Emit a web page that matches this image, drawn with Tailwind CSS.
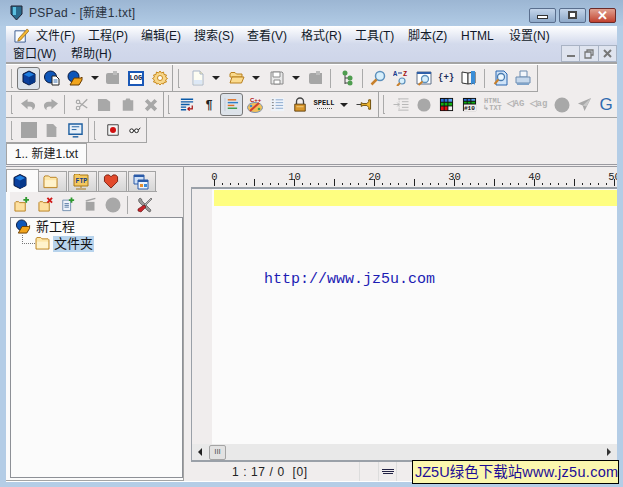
<!DOCTYPE html>
<html lang="en">
<head>
<meta charset="UTF-8">
<title>PSPad</title>
<script src="https://cdn.jsdelivr.net/npm/@tailwindcss/browser@4"></script>
</head>
<body class="bg-[#b4cde6]">
<svg width="0" height="0" class="absolute">
  <defs>
    <symbol id="cube" viewBox="0 0 16 16"><path d="M8 1l6 3v8l-6 3-6-3V4z" fill="#0b3f9c" stroke="#06163c"/><path d="M8 7l6-3v8l-6 3z" fill="#06388a"/><path d="M3 4.500L8 2l5 2.500L8 7z" fill="#1f7fe0"/></symbol>
    <symbol id="projdoc" viewBox="0 0 16 16"><circle cx="6.500" cy="7" r="6" fill="#0f56b8" stroke="#06163c"/><path d="M8 6h4l3 3v6H8z" fill="#fff" stroke="#222"/><path d="M9.500 10h4M9.500 12h4" stroke="#3a70b0"/></symbol>
    <symbol id="projopen" viewBox="0 0 16 16"><circle cx="6.500" cy="6.500" r="5.500" fill="#0f56b8" stroke="#06163c"/><path d="M7 8h7l1-1v3l-3 5H3z" fill="#f2a51c" stroke="#6b3d00"/></symbol>
    <symbol id="graydisk" viewBox="0 0 16 16"><path d="M3 3h7v2h2V3h2v11H3a2 2 0 0 1-2-2V5a2 2 0 0 1 2-2z" fill="#a6a6a6"/><path d="M8 1h4v4H8z" fill="#bcbcbc"/></symbol>
    <symbol id="gear" viewBox="0 0 16 16"><path d="M8 1l1.500 2 2-1 .5 2.500 2.500.5-1 2 2 1.500-2 1.500 1 2-2.500.5-.5 1.500-2-.5L8 15l-1.500-1.500-2 .5-.5-1.500-2.500-.5 1-2L.5 8.500l2-1.500-1-2L4 4.500 4.500 2l2 1z" fill="#f7d68a" stroke="#c98a1c"/><circle cx="8" cy="8" r="2.500" fill="#fff" stroke="#c98a1c"/></symbol>
    <symbol id="newdoc" viewBox="0 0 16 16"><path d="M3 1h7l3 3v11H3z" fill="#fdfdf2" stroke="#a9b6c8"/><path d="M4 10h8v4H4z" fill="#dde8f6"/><path d="M10 1v3h3" fill="#f8e9b0" stroke="#a9b6c8"/></symbol>
    <symbol id="folder" viewBox="0 0 16 14"><path d="M1 2l1-1.500h4L7.500 2H14l1 1v10H1z" fill="#fde6a8" stroke="#b9801f"/><path d="M2 5h12v7H2z" fill="#fff3cc"/></symbol>
    <symbol id="folderopen" viewBox="0 0 16 16"><path d="M1 4l1-1.500h4L7.500 4H13v3H1z" fill="#f9d98c" stroke="#b9801f"/><path d="M1 13l2-6h12l-2.500 6z" fill="#fbdb8e" stroke="#b9801f"/></symbol>
    <symbol id="save" viewBox="0 0 16 16"><path d="M2 2h11l1 1v11H2z" fill="#e8e8e8" stroke="#8a8a8a"/><path d="M4 2h7v5H4zM5 10h6v4H5z" fill="#fff" stroke="#8a8a8a"/></symbol>
    <symbol id="tree" viewBox="0 0 16 16"><path d="M6 3v11M6 8h4M6 13h4" stroke="#444" fill="none"/><circle cx="6" cy="3" r="2.500" fill="#4f9d4f"/><circle cx="11" cy="8" r="2.500" fill="#4f9d4f"/><circle cx="11" cy="13" r="2.500" fill="#4f9d4f"/></symbol>
    <symbol id="glass" viewBox="0 0 16 16"><circle cx="10" cy="6" r="4.500" fill="#d7effc" stroke="#5d90bc" stroke-width="1.500"/><path d="M6.500 9.500L1.500 14.500" stroke="#c8802c" stroke-width="2.500"/></symbol>
    <symbol id="az" viewBox="0 0 16 16"><text x="0" y="6" font-size="7" font-weight="700" fill="#1c3c8c" font-family="Liberation Mono">A</text><path d="M5 3h4" stroke="#1c3c8c"/><text x="10" y="6" font-size="7" font-weight="700" fill="#a01010" font-family="Liberation Mono">Z</text><circle cx="9" cy="11" r="3" fill="#d7effc" stroke="#5d90bc" stroke-width="1.200"/><path d="M7 13l-3 3" stroke="#c8802c" stroke-width="2"/></symbol>
    <symbol id="winglass" viewBox="0 0 16 16"><path d="M1 2h14v12H1z" fill="#fff" stroke="#5c6e88"/><path d="M1 2h14v2H1z" fill="#2f5fa8"/><circle cx="9" cy="9" r="3.500" fill="#d7effc" stroke="#5d90bc" stroke-width="1.300"/><path d="M6.500 11.500l-4 3.500" stroke="#c8802c" stroke-width="2"/></symbol>
    <symbol id="book" viewBox="0 0 16 16"><path d="M1 2l6 1v11l-6-1z" fill="#fff" stroke="#333"/><path d="M7 3l7-1v11l-7 1z" fill="#f4f4f4" stroke="#333"/><path d="M10 1h4v14l-2-2-2 2z" fill="#3b8ed8"/></symbol>
    <symbol id="docglass" viewBox="0 0 16 16"><path d="M3 1h8l3 3v11H3z" fill="#cfe3f8" stroke="#2a66b0"/><circle cx="8" cy="7" r="3.500" fill="#eef8ff" stroke="#4a7cb0" stroke-width="1.300"/><path d="M5.500 9.500L1.500 14" stroke="#c8802c" stroke-width="2"/></symbol>
    <symbol id="printer" viewBox="0 0 16 16"><path d="M5 1h7v6H5z" fill="#f2f6fb" stroke="#6d8cb0"/><path d="M1 7h14v6H1z" fill="#c6d8ec" stroke="#6d8cb0"/><path d="M2 13h12v2H2z" fill="#7fa2c8"/></symbol>
    <symbol id="undo" viewBox="0 0 16 16"><path d="M7 2v3h3c3 0 5 2 5 4s-1 4-3 5c1-3-1-4-3-4H7v3L0 7z" fill="#a8a8a8"/></symbol>
    <symbol id="redo" viewBox="0 0 16 16"><path d="M9 2v3H6C3 5 1 7 1 9s1 4 3 5c-1-3 1-4 3-4h2v3l7-6z" fill="#a8a8a8"/></symbol>
    <symbol id="cut" viewBox="0 0 16 16"><circle cx="3.500" cy="5" r="2" fill="none" stroke="#a8a8a8" stroke-width="1.300"/><circle cx="3.500" cy="12" r="2" fill="none" stroke="#a8a8a8" stroke-width="1.300"/><path d="M5 6l9 6M5 11l9-9" stroke="#a8a8a8" stroke-width="1.500"/></symbol>
    <symbol id="copy" viewBox="0 0 16 16"><path d="M1 2h9l4 3v10H1z" fill="#a8a8a8"/></symbol>
    <symbol id="paste" viewBox="0 0 16 16"><path d="M6 1h4l1 2h3v12H2V3h3z" fill="#a8a8a8"/></symbol>
    <symbol id="xgray" viewBox="0 0 16 16"><path d="M1 4l3-3 4 4 4-4 3 3-4 4 4 4-3 3-4-4-4 4-3-3 4-4z" fill="#a8a8a8"/></symbol>
    <symbol id="wrap" viewBox="0 0 16 16"><path d="M1 2h14M1 5h14M1 8h10" stroke="#0a5aa8" stroke-width="1.600"/><path d="M1 11h6M1 14h6" stroke="#0a5aa8" stroke-width="1.600"/><path d="M14 9v4H9m2-2l-2 2 2 2" fill="none" stroke="#a81010" stroke-width="1.400"/></symbol>
    <symbol id="lines" viewBox="0 0 16 16"><path d="M1 1v14" stroke="#c4cbd6"/><path d="M4 3h9" stroke="#e07020" stroke-width="1.500"/><path d="M4 6h11" stroke="#2f7fc8" stroke-width="1.500"/><path d="M4 9h7" stroke="#e07020" stroke-width="1.500"/><path d="M4 12h10" stroke="#3a9a4a" stroke-width="1.500"/></symbol>
    <symbol id="palette" viewBox="0 0 16 16"><text x="3" y="5" font-size="6" font-weight="700" fill="#b01010" font-family="Liberation Sans">C++</text><ellipse cx="8" cy="10.500" rx="7.500" ry="5" fill="#f2c05a" stroke="#7a90b0"/><path d="M3 14L12 6" stroke="#d04030" stroke-width="2"/><circle cx="4" cy="9" r="1.300" fill="#3a8ad8"/><circle cx="12" cy="12" r="1.300" fill="#4aa04a"/></symbol>
    <symbol id="numlist" viewBox="0 0 16 16"><path d="M1 1h14v14H1z" fill="#eef3fa"/><path d="M6 3h8M6 6h8M6 9h8M6 12h8" stroke="#8aa8cc"/><path d="M2 3h2M2 6h2M2 9h2M2 12h2" stroke="#777"/></symbol>
    <symbol id="lock" viewBox="0 0 16 16"><path d="M4 7V4a4 4 0 0 1 8 0v3" fill="none" stroke="#444" stroke-width="1.500"/><path d="M2 7h12v8H2z" fill="#d8962c" stroke="#5a3a08"/><path d="M4 10h8" stroke="#f3d28a"/></symbol>
    <symbol id="pin" viewBox="0 0 16 16"><path d="M0 8h5" stroke="#333"/><path d="M5 6l2 1h4l2-2v-2h2v10h-2v-2l-2-2H7l-2 1z" fill="#eeb52c" stroke="#6b4a08"/></symbol>
    <symbol id="indent" viewBox="0 0 16 16"><path d="M5 2h11M9 5h7M9 8h7M9 11h7M5 14h11" stroke="#b4b4b4"/><path d="M0 8h6m-2-2l2 2-2 2" fill="none" stroke="#b4b4b4"/><path d="M6 2v12" stroke="#b4b4b4" stroke-dasharray="1 1"/></symbol>
    <symbol id="dot" viewBox="0 0 16 16"><circle cx="8" cy="8" r="7.500" fill="#a8a8a8"/></symbol>
    <symbol id="grid" viewBox="0 0 16 16"><path d="M1 1h14v14H1z" fill="#111"/><path d="M2 2h3v3H2zM6 2h3v3H6z" fill="#2a70d8"/><path d="M10 2h4v3h-4z" fill="#5aa0f0"/><path d="M2 6h3v3H2zM6 6h3v3H6zM10 6h4v3h-4z" fill="#10b010"/><path d="M2 10h3v4H2zM6 10h3v4H6z" fill="#e01010"/><path d="M10 10h4v4h-4z" fill="#eee"/></symbol>
    <symbol id="grid10" viewBox="0 0 16 16"><path d="M1 1h14v14H1z" fill="#111"/><path d="M2 2h3v2H2zM6 2h3v2H6z" fill="#2a70d8"/><path d="M10 2h4v2h-4z" fill="#5aa0f0"/><path d="M2 5h3v2H2zM6 5h3v2H6zM10 5h4v2h-4z" fill="#10b010"/><path d="M2 8h13v7H2z" fill="#f0eded"/><text x="2" y="14" font-size="6.500" font-weight="700" fill="#111" font-family="Liberation Mono">#10</text></symbol>
    <symbol id="rocket" viewBox="0 0 16 16"><path d="M15 1L1 7l5 2 2 6z" fill="#a8a8a8"/><path d="M15 1L6 9l4 1z" fill="#c8c8c8"/></symbol>
    <symbol id="square" viewBox="0 0 16 16"><path d="M0 0h16v16H0z" fill="#a4a4a4"/></symbol>
    <symbol id="docgray" viewBox="0 0 16 16"><path d="M2 0h8l4 4v12H2z" fill="#a8a8a8"/></symbol>
    <symbol id="monitor" viewBox="0 0 16 16"><path d="M1 1h14v11H1z" fill="#e8f0f8" stroke="#1f5fa0" stroke-width="1.500"/><path d="M4 4h8M4 7h5" stroke="#1f5fa0"/><path d="M5 14h6v1.500H5z" fill="#1f5fa0"/></symbol>
    <symbol id="record" viewBox="0 0 16 16"><path d="M1 1h14v14H1z" fill="#f4f4f4" stroke="#111"/><circle cx="8" cy="8" r="4" fill="#d01010"/></symbol>
    <symbol id="glasses" viewBox="0 0 16 16"><circle cx="3.500" cy="9" r="2.500" fill="#fff" stroke="#111" stroke-width="1.200"/><circle cx="10" cy="9" r="2.500" fill="#fff" stroke="#111" stroke-width="1.200"/><path d="M6 8.500h1.500M12.500 8L15 5" stroke="#111" stroke-width="1.200"/></symbol>
    <symbol id="ftp" viewBox="0 0 16 16"><path d="M1 1l1-1h4l1 1h8v11H1z" fill="#f4c860" stroke="#a87818"/><text x="2.500" y="9" font-size="6.500" font-weight="700" fill="#123c88" font-family="Liberation Mono">FTP</text><path d="M8 12v2M3 15h10" stroke="#a87818"/></symbol>
    <symbol id="heart" viewBox="0 0 16 16"><path d="M8 15L1 8V3l2-2h3l2 2 2-2h3l2 2v5z" fill="#e24a2c" stroke="#7a2010"/></symbol>
    <symbol id="windows" viewBox="0 0 16 16"><path d="M1 1h10v9H1z" fill="#cfe0f6" stroke="#2a5aa8"/><path d="M1 1h10v2H1z" fill="#2a5aa8"/><path d="M5 6h10v9H5z" fill="#eef4fc" stroke="#2a5aa8"/><path d="M5 6h10v2H5z" fill="#2a5aa8"/><path d="M7 10h3v3H7z" fill="#e89030"/><path d="M11 10h3v3h-3z" fill="#3a8ad8"/></symbol>
    <symbol id="folderadd" viewBox="0 0 16 16"><path d="M1 6l1-1h3l1 1h6v9H1z" fill="#fde0a0" stroke="#b9801f"/><path d="M13 0v6M10 3h6" stroke="#2f9a2f" stroke-width="2"/></symbol>
    <symbol id="folderdel" viewBox="0 0 16 16"><path d="M1 6l1-1h3l1 1h6v9H1z" fill="#fde0a0" stroke="#b9801f"/><path d="M10 1l5 5M15 1l-5 5" stroke="#d01818" stroke-width="2"/></symbol>
    <symbol id="docadd" viewBox="0 0 16 16"><path d="M2 3h9v12H2z" fill="#eef3fa" stroke="#6a88aa"/><path d="M4 7h5M4 9h5M4 11h5" stroke="#4a6f9c"/><path d="M12 0v6M9 3h6" stroke="#2f9a2f" stroke-width="2"/></symbol>
    <symbol id="trashgray" viewBox="0 0 16 16"><path d="M2 5h10v10H2z" fill="#a4a4a4"/><path d="M2 4l11-3" stroke="#a4a4a4" stroke-width="1.500"/></symbol>
    <symbol id="tools" viewBox="0 0 16 16"><path d="M3 1a3 3 0 0 0-1 4l9 9 2 1 1-2-9-9a3 3 0 0 0-2-3z" fill="#9a9a9a" stroke="#444" stroke-width=".6"/><path d="M14 1l1 1-7 7-1-1z" fill="#b4b4b4" stroke="#444" stroke-width=".6"/><path d="M7 8l2 2-5 5-3-1 0-2z" fill="#c8242a" stroke="#5a1010" stroke-width=".6"/></symbol>
  </defs>
</svg>

<div class="relative w-[623px] h-[487px] overflow-hidden flex flex-col bg-[#b4cde6] font-['Liberation_Sans','Noto_Sans_CJK_SC',sans-serif] text-[12px] text-[#101828]">

  <!-- Title bar -->
  <div class="h-[26px] shrink-0 flex items-center bg-gradient-to-b from-[#9cb6d3] to-[#b1cbe5] pl-[10px] pr-[7px]">
    <svg class="w-[13px] h-[16px] mr-[6px]" viewBox="0 0 13 16"><path d="M1 1h11v8l-5.500 6L1 9z" fill="#2a6a8c" stroke="#223"/><path d="M3 2h3v8H3z" fill="#5cc0e0"/></svg>
    <span class="text-[12px] tracking-[0.3px] text-[#2a3342]">PSPad - [新建1.txt]</span>
    <div class="ml-auto flex gap-[3px] mt-[4px]">
      <div class="w-[27px] h-[15px] rounded-[2px] border border-[#5a6f8e] bg-gradient-to-b from-[#c4d5ea] to-[#8ea9c9] flex items-center justify-center"><div class="w-[11px] h-[4px] border border-[#333] bg-white mt-[3px]"></div></div>
      <div class="w-[27px] h-[15px] rounded-[2px] border border-[#5a6f8e] bg-gradient-to-b from-[#c4d5ea] to-[#8ea9c9] flex items-center justify-center"><div class="w-[9px] h-[8px] border-2 border-[#444] bg-white"></div></div>
      <div class="w-[27px] h-[15px] rounded-[2px] border border-[#6b2a28] bg-gradient-to-b from-[#e0a090] to-[#c0402e] flex items-center justify-center text-white font-bold text-[13px] leading-none">✕</div>
    </div>
  </div>

  <!-- Window body -->
  <div class="mx-[6px] h-[456px] shrink-0 flex flex-col bg-[#f0eded] border-b border-white">

    <!-- Menu -->
    <div class="h-[38px] shrink-0 relative bg-gradient-to-b from-white via-[#d3daec] via-[50%] to-[#ced5e9] border-b-2 border-[#a4a4a4]">
      <div class="h-[19px] flex items-center">
        <svg class="w-[15px] h-[15px] ml-[8px] mr-[7px]" viewBox="0 0 16 16"><path d="M1 3h11v12H1z" fill="#f8fbff" stroke="#3a5a90"/><path d="M5 11L14 1l2 2-9 10-3 1z" fill="#f2b632" stroke="#8a5a10" stroke-width=".7"/></svg>
        <span class="w-[52px]">文件(F)</span><span class="w-[53px]">工程(P)</span><span class="w-[53px]">编辑(E)</span><span class="w-[53px]">搜索(S)</span><span class="w-[54px]">查看(V)</span><span class="w-[54px]">格式(R)</span><span class="w-[53px]">工具(T)</span><span class="w-[53px]">脚本(Z)</span><span class="w-[48px]">HTML</span><span>设置(N)</span>
      </div>
      <div class="h-[17px] flex items-center pl-[7px]">
        <span class="w-[58px]">窗口(W)</span><span>帮助(H)</span>
        <div class="ml-auto flex h-full text-[#6e7684]">
          <div class="w-[19px] border border-[#a9b3c4] bg-[#dfe4ef] flex items-end justify-center pb-[4px]"><div class="w-[8px] h-[2px] bg-[#777]"></div></div>
          <div class="w-[19px] border-y border-r border-[#a9b3c4] bg-[#dfe4ef] flex items-center justify-center"><svg class="w-[10px] h-[10px]" viewBox="0 0 10 10"><path d="M3 3V1h6v5H7M1 3h6v6H1z" fill="none" stroke="#777" stroke-width="1.300"/></svg></div>
          <div class="w-[18px] border-y border-r border-[#a9b3c4] bg-[#dfe4ef] flex items-center justify-center"><svg class="w-[9px] h-[9px]" viewBox="0 0 9 9"><path d="M1 1l7 7M8 1L1 8" stroke="#777" stroke-width="2"/></svg></div>
        </div>
      </div>
    </div>

    <!-- Toolbar row 1 -->
    <div class="h-[28px] shrink-0 flex items-center border-t border-white">
      <div class="flex items-center h-full w-[532px] border-r border-b border-[#a4a4a4]">
        <div class="ml-[5px] mr-[4px] w-[2px] h-[19px] border-l border-b border-[#aaa]"></div>
        <div class="w-[23px] h-[23px] flex items-center justify-center border border-[#777] rounded-[3px] bg-[#dde3ea]"><svg class="w-[16px] h-[16px]"><use href="#cube"/></svg></div>
        <div class="w-[23px] flex justify-center"><svg class="w-[16px] h-[16px]"><use href="#projdoc"/></svg></div>
        <div class="w-[23px] flex justify-center"><svg class="w-[16px] h-[16px]"><use href="#projopen"/></svg></div>
        <div class="w-[17px] flex justify-center"><div class="w-0 h-0 border-x-[4px] border-x-transparent border-t-[4px] border-t-[#222]"></div></div>
        <div class="w-[20px] flex justify-center"><svg class="w-[16px] h-[16px]"><use href="#graydisk"/></svg></div>
        <div class="w-[25px] flex justify-center"><div class="w-[16px] h-[15px] border-2 border-[#1a58b8] bg-white text-[7px] font-bold leading-[11px] text-center text-[#102040] font-['Liberation_Mono']">LOG</div></div>
        <div class="w-[23px] flex justify-center"><svg class="w-[16px] h-[16px]"><use href="#gear"/></svg></div>
        <div class="w-[2px] h-full border-r border-[#a4a4a4]"></div>
        <div class="ml-[5px] mr-[6px] w-[2px] h-[19px] border-l border-b border-[#aaa]"></div>
        <svg class="ml-[4px] w-[16px] h-[16px]"><use href="#newdoc"/></svg>
        <div class="ml-[6px] w-0 h-0 border-x-[4px] border-x-transparent border-t-[4px] border-t-[#222]"></div>
        <svg class="ml-[9px] w-[16px] h-[16px]"><use href="#folderopen"/></svg>
        <div class="ml-[7px] w-0 h-0 border-x-[4px] border-x-transparent border-t-[4px] border-t-[#222]"></div>
        <svg class="ml-[9px] w-[16px] h-[16px]"><use href="#save"/></svg>
        <div class="ml-[7px] w-0 h-0 border-x-[4px] border-x-transparent border-t-[4px] border-t-[#222]"></div>
        <svg class="ml-[8px] w-[16px] h-[16px]"><use href="#graydisk"/></svg>
        <div class="ml-[6px] w-[1px] h-[19px] bg-[#aaa]"></div>
        <svg class="ml-[8px] w-[16px] h-[16px]"><use href="#tree"/></svg>
        <div class="ml-[7px] w-[1px] h-[19px] bg-[#aaa]"></div>
        <svg class="ml-[7px] w-[16px] h-[16px]"><use href="#glass"/></svg>
        <svg class="ml-[7px] w-[16px] h-[16px]"><use href="#az"/></svg>
        <svg class="ml-[7px] w-[16px] h-[16px]"><use href="#winglass"/></svg>
        <div class="ml-[6px] w-[16px] text-center text-[9px] font-bold text-[#1a2a5a] font-['Liberation_Mono'] whitespace-nowrap leading-none">{+}</div>
        <svg class="ml-[7px] w-[16px] h-[16px]"><use href="#book"/></svg>
        <div class="ml-[7px] w-[1px] h-[19px] bg-[#aaa]"></div>
        <svg class="ml-[8px] w-[16px] h-[16px]"><use href="#docglass"/></svg>
        <svg class="ml-[6px] w-[16px] h-[16px]"><use href="#printer"/></svg>
      </div>
    </div>

    <!-- Toolbar row 2 -->
    <div class="h-[26px] shrink-0 flex items-center border-b border-[#a4a4a4]">
      <div class="ml-[5px] mr-[5px] w-[2px] h-[19px] border-l border-b border-[#aaa]"></div>
      <div class="w-[21px] flex justify-center"><svg class="w-[15px] h-[15px]"><use href="#undo"/></svg></div>
      <div class="w-[22px] flex justify-center"><svg class="w-[15px] h-[15px]"><use href="#redo"/></svg></div>
      <div class="ml-[3px] w-[1px] h-[19px] bg-[#aaa]"></div>
      <div class="w-[33px] flex justify-center"><svg class="w-[14px] h-[15px]"><use href="#cut"/></svg></div>
      <div class="w-[13px] flex justify-center"><svg class="w-[15px] h-[15px] shrink-0"><use href="#copy"/></svg></div>
      <div class="w-[33px] flex justify-center"><svg class="w-[14px] h-[15px]"><use href="#paste"/></svg></div>
      <div class="w-[13px] flex justify-center"><svg class="w-[14px] h-[14px] shrink-0"><use href="#xgray"/></svg></div>
      <div class="ml-[5px] w-[2px] h-full border-r border-[#a4a4a4]"></div>
      <div class="ml-[4px] mr-[5px] w-[2px] h-[19px] border-l border-b border-[#aaa]"></div>
      <div class="w-[23px] flex justify-center"><svg class="w-[14px] h-[15px]"><use href="#wrap"/></svg></div>
      <div class="w-[22px] flex justify-center text-[12px] font-bold text-[#222] leading-none">¶</div>
      <div class="w-[23px] h-[23px] flex items-center justify-center border border-[#777] rounded-[3px] bg-[#dde3ea]"><svg class="w-[15px] h-[15px]"><use href="#lines"/></svg></div>
      <div class="w-[23px] flex justify-center"><svg class="w-[16px] h-[16px]"><use href="#palette"/></svg></div>
      <div class="w-[23px] flex justify-center"><svg class="w-[15px] h-[15px]"><use href="#numlist"/></svg></div>
      <div class="w-[22px] flex justify-center"><svg class="w-[14px] h-[16px]"><use href="#lock"/></svg></div>
      <div class="w-[26px] flex flex-col items-center leading-none"><span class="text-[7px] font-bold font-['Liberation_Mono'] text-[#111]">SPELL</span><span class="w-[15px] h-[2px] border-b border-dotted border-[#555]"></span></div>
      <div class="w-[14px] flex justify-center"><div class="w-0 h-0 border-x-[4px] border-x-transparent border-t-[4px] border-t-[#222]"></div></div>
      <div class="w-[26px] flex justify-center"><svg class="w-[16px] h-[15px]"><use href="#pin"/></svg></div>
      <div class="w-[2px] h-full border-r border-[#a4a4a4]"></div>
      <div class="ml-[4px] mr-[4px] w-[2px] h-[19px] border-l border-b border-[#aaa]"></div>
      <div class="w-[23px] flex justify-center"><svg class="w-[16px] h-[15px]"><use href="#indent"/></svg></div>
      <div class="w-[23px] flex justify-center"><svg class="w-[14px] h-[14px]"><use href="#dot"/></svg></div>
      <div class="w-[23px] flex justify-center"><svg class="w-[15px] h-[15px]"><use href="#grid"/></svg></div>
      <div class="w-[23px] flex justify-center"><svg class="w-[15px] h-[15px]"><use href="#grid10"/></svg></div>
      <div class="w-[23px] flex flex-col items-center text-[7px] leading-[7px] font-['Liberation_Mono'] font-bold text-[#b0b0b0]"><span>HTML</span><span>↳TXT</span></div>
      <div class="w-[23px] text-center text-[9px] font-bold font-['Liberation_Mono'] text-[#b4b4b4] whitespace-nowrap">◁AG</div>
      <div class="w-[23px] text-center text-[9px] font-bold font-['Liberation_Mono'] text-[#b4b4b4] whitespace-nowrap">◁ag</div>
      <div class="w-[23px] flex justify-center"><svg class="w-[16px] h-[16px]"><use href="#dot"/></svg></div>
      <div class="w-[23px] flex justify-center"><svg class="w-[15px] h-[15px]"><use href="#rocket"/></svg></div>
      <div class="w-[20px] text-center text-[17px] leading-none font-['Liberation_Sans'] text-[#2f6ab0]">G</div>
    </div>

    <!-- Toolbar row 3 -->
    <div class="h-[25px] shrink-0 flex">
      <div class="flex items-center h-full w-[141px] border-r border-b border-[#a4a4a4]">
        <div class="ml-[5px] mr-[5px] w-[2px] h-[19px] border-l border-b border-[#aaa]"></div>
        <div class="w-[23px] flex justify-center"><svg class="w-[16px] h-[16px]"><use href="#square"/></svg></div>
        <div class="w-[22px] flex justify-center"><svg class="w-[13px] h-[15px]"><use href="#docgray"/></svg></div>
        <div class="w-[26px] flex justify-center"><svg class="w-[15px] h-[15px]"><use href="#monitor"/></svg></div>
        <div class="w-[1px] h-full bg-[#a4a4a4]"></div>
        <div class="ml-[5px] w-[2px] h-[19px] border-l border-b border-[#aaa]"></div>
        <div class="ml-[5px] w-[23px] flex justify-center"><svg class="w-[12px] h-[12px]"><use href="#record"/></svg></div>
        <div class="w-[22px] flex justify-center"><svg class="w-[16px] h-[12px]"><use href="#glasses"/></svg></div>
      </div>
    </div>

    <!-- Document tab -->
    <div class="h-[24px] shrink-0 flex border-b-[3px] border-double border-[#9a9aa0]">
      <div class="w-[81px] h-[21px] bg-[#fbfbfb] border-x border-t border-[#a4a4a4] flex items-center justify-center whitespace-nowrap text-[12px] text-[#222]">1.. 新建1.txt</div>
    </div>

    <!-- Main area -->
    <div class="flex-1 flex min-h-0">

      <!-- Left panel -->
      <div class="w-[178px] shrink-0 flex flex-col bg-[#fbfbfb] border-b border-[#a4a4a4] border-r">
        <div class="h-[25px] shrink-0 flex items-end bg-[#f0eded]">
          <div class="w-[33px] h-[23px] pr-[5px] bg-[#fbfbfb] border-x border-t border-[#a4a4a4] flex items-center justify-center"><svg class="w-[16px] h-[17px]"><use href="#cube"/></svg></div>
          <div class="flex h-[21px] border-b border-[#a4a4a4] pr-[1px] gap-[1px]">
            <div class="w-[28px] pr-[5px] bg-gradient-to-b from-[#f0eded] to-[#d6d6d6] border-t border-r border-[#a4a4a4] flex items-center justify-center"><svg class="w-[15px] h-[14px]"><use href="#folder"/></svg></div>
            <div class="w-[29px] pr-[4px] bg-gradient-to-b from-[#f0eded] to-[#d6d6d6] border-x border-t border-[#a4a4a4] flex items-center justify-center"><svg class="w-[16px] h-[16px]"><use href="#ftp"/></svg></div>
            <div class="w-[29px] pr-[4px] bg-gradient-to-b from-[#f0eded] to-[#d6d6d6] border-x border-t border-[#a4a4a4] flex items-center justify-center"><svg class="w-[16px] h-[15px]"><use href="#heart"/></svg></div>
            <div class="w-[28px] pr-[2px] bg-gradient-to-b from-[#f0eded] to-[#d6d6d6] border-x border-t border-[#a4a4a4] flex items-center justify-center"><svg class="w-[16px] h-[16px]"><use href="#windows"/></svg></div>
          </div>
        </div>
        <div class="flex-1 flex flex-col pl-[4px] pb-[2px] min-h-0">
          <div class="h-[25px] shrink-0 flex items-center bg-[#f0eded]">
            <div class="w-[23px] flex justify-center"><svg class="w-[15px] h-[15px]"><use href="#folderadd"/></svg></div>
            <div class="w-[24px] flex justify-center"><svg class="w-[15px] h-[15px]"><use href="#folderdel"/></svg></div>
            <div class="w-[22px] flex justify-center"><svg class="w-[14px] h-[15px]"><use href="#docadd"/></svg></div>
            <div class="w-[23px] flex justify-center"><svg class="w-[14px] h-[15px]"><use href="#trashgray"/></svg></div>
            <div class="w-[22px] flex justify-center"><svg class="w-[16px] h-[16px]"><use href="#dot"/></svg></div>
            <div class="ml-[3px] w-[1px] h-[18px] bg-[#aaa]"></div>
            <div class="ml-[8px] w-[17px] flex justify-center"><svg class="w-[16px] h-[16px]"><use href="#tools"/></svg></div>
          </div>
          <div class="flex-1 border border-[#8d9096] bg-[#fbfbfb] pl-[4px] text-[13px] text-[#111]">
            <div class="h-[17px] flex items-center gap-[5px]"><svg class="w-[16px] h-[15px]"><use href="#projopen"/></svg><span>新工程</span></div>
            <div class="h-[17px] flex items-center">
              <div class="ml-[7px] mb-[8px] w-[13px] h-[9px] border-l border-b border-dotted border-[#777]"></div>
              <svg class="w-[15px] h-[13px] mr-[3px]"><use href="#folder"/></svg>
              <span class="bg-[#b7d3ec] px-[1px] leading-[16px]">文件夹</span>
            </div>
          </div>
        </div>
      </div>

      <div class="w-[7px] shrink-0"></div>

      <!-- Editor -->
      <div class="flex-1 flex flex-col min-w-0">
        <!-- Ruler -->
        <svg class="h-[20px] w-full shrink-0" viewBox="0 0 426 20">
          <defs><pattern id="ticks" x="23" y="0" width="40" height="20" patternUnits="userSpaceOnUse"><path d="M.5 12v7M8.500 16v2M16.500 16v2M24.500 16v2M32.500 16v2" stroke="#222"/></pattern></defs>
          <rect x="23" y="0" width="403" height="20" fill="url(#ticks)"/>
          <path d="M103.500 14v5M183.500 14v5M263.500 14v5M343.500 14v5M423.500 14v5" stroke="#222" fill="none"/>
          <g font-family="Liberation Mono" font-size="10.500" fill="#222" text-anchor="middle">
            <text x="23.500" y="13">0</text><text x="103.500" y="13">10</text><text x="183.500" y="13">20</text><text x="263.500" y="13">30</text><text x="343.500" y="13">40</text><text x="423.500" y="13">50</text>
          </g>
        </svg>
        <div class="flex-1 flex flex-col border-t-2 border-l border-b-2 border-[#9aa0a8] min-h-0">
          <div class="flex-1 flex min-h-0 bg-[#fbfbfb]">
            <div class="w-[20px] shrink-0 bg-[#f0eded]"></div>
            <div class="flex-1 pl-[2px]">
              <div class="h-[16px] bg-[#fefe80] mt-[1px]"></div>
              <div class="pl-[50px] pt-[65px] font-['Liberation_Mono'] text-[15px] leading-[17px] text-[#1c1cb4]">http://www.jz5u.com</div>
            </div>
          </div>
          <div class="h-[16px] shrink-0 flex items-center justify-between bg-[#e9e9e9] pl-[6px] pr-[6px]">
            <div class="flex items-center gap-[7px]">
              <div class="w-0 h-0 border-y-[4px] border-y-transparent border-r-[4px] border-r-[#222]"></div>
              <div class="w-[17px] h-[15px] border border-[#a4a4a4] rounded-[2px] bg-[#e2e2e2] flex items-center justify-center text-[8px] leading-none text-[#555]">III</div>
            </div>
            <div class="w-0 h-0 border-y-[4px] border-y-transparent border-l-[4px] border-l-[#333]"></div>
          </div>
        </div>
        <!-- Status bar -->
        <div class="h-[19px] shrink-0 flex items-center text-[12px] text-[#222]">
          <div class="w-[168px] pl-[41px] h-full flex items-center whitespace-pre tracking-[0.6px]">1 : 17 / 0&nbsp;&nbsp;[0]</div>
          <div class="w-[19px] h-full border-l border-[#ddd]"></div>
          <div class="w-[19px] h-full border-x border-[#ddd] flex flex-col items-center justify-center gap-[1px]">
            <div class="w-[12px] h-[1px] bg-[#224]"></div><div class="w-[12px] h-[1px] bg-[#224]"></div><div class="w-[10px] h-[1px] bg-[#224]"></div>
          </div>
        </div>
      </div>
    </div>
  </div>

  <!-- Watermark overlay -->
  <div class="absolute left-[412px] top-[460px] w-[207px] h-[24px] bg-[#fbf7ae] border border-black flex items-center pl-[2px] whitespace-nowrap text-[14.5px] leading-none text-[#1c0c96]">JZ5U绿色下载站<span class="tracking-[0.3px]">www.jz5u.com</span></div>
</div>
</body>
</html>
